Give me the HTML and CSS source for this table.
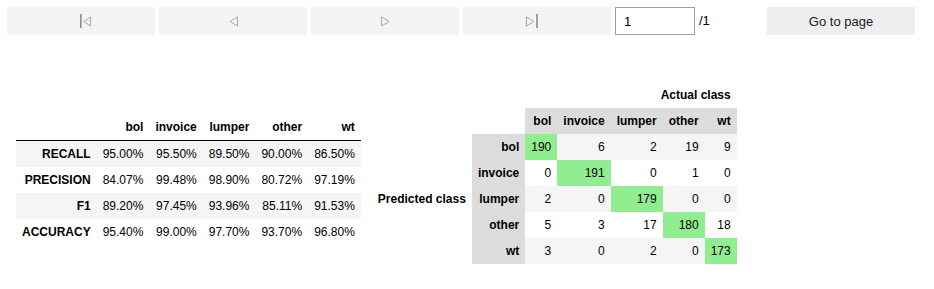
FILE: index.html
```html
<!DOCTYPE html>
<html>
<head>
<meta charset="utf-8">
<link rel="stylesheet" href="styles.css">
</head>
<body>
<div class="toolbar">
  <button class="nav nav-first" disabled>
    <svg width="11" height="14" viewBox="0 0 11 14"><rect x="0" y="0" width="1.6" height="14" fill="#8c8c8c"/><polygon points="10.5,3 3.5,7.5 10.5,12" fill="none" stroke="#a6a6a6" stroke-width="1"/></svg>
  </button>
  <button class="nav" disabled>
    <svg width="9" height="14" viewBox="0 0 9 14"><polygon points="8.5,3 0.8,7.5 8.5,12" fill="none" stroke="#a6a6a6" stroke-width="1"/></svg>
  </button>
  <button class="nav" disabled>
    <svg width="9" height="14" viewBox="0 0 9 14"><polygon points="0.5,3 8.2,7.5 0.5,12" fill="none" stroke="#a6a6a6" stroke-width="1"/></svg>
  </button>
  <button class="nav nav-last" disabled>
    <svg width="12" height="14" viewBox="0 0 12 14"><polygon points="0.5,3 7.8,7.5 0.5,12" fill="none" stroke="#a6a6a6" stroke-width="1"/><rect x="10.2" y="0" width="1.6" height="14" fill="#8c8c8c"/></svg>
  </button>
  <input class="page-input" type="text" value="1">
  <span class="page-total">/1</span>
  <button class="goto">Go to page</button>
</div>

<div class="tables">
  <table class="metrics">
    <thead>
      <tr><th></th><th>bol</th><th>invoice</th><th>lumper</th><th>other</th><th>wt</th></tr>
    </thead>
    <tbody>
      <tr><th>RECALL</th><td>95.00%</td><td>95.50%</td><td>89.50%</td><td>90.00%</td><td>86.50%</td></tr>
      <tr><th>PRECISION</th><td>84.07%</td><td>99.48%</td><td>98.90%</td><td>80.72%</td><td>97.19%</td></tr>
      <tr><th>F1</th><td>89.20%</td><td>97.45%</td><td>93.96%</td><td>85.11%</td><td>91.53%</td></tr>
      <tr><th>ACCURACY</th><td>95.40%</td><td>99.00%</td><td>97.70%</td><td>93.70%</td><td>96.80%</td></tr>
    </tbody>
  </table>

  <table class="confusion">
    <thead>
      <tr><th></th><th></th><th colspan="5" class="group">Actual class</th></tr>
      <tr><th></th><th></th><th class="col">bol</th><th class="col">invoice</th><th class="col">lumper</th><th class="col">other</th><th class="col">wt</th></tr>
    </thead>
    <tbody>
      <tr><th rowspan="5" class="pred">Predicted class</th><th class="idx">bol</th><td class="hit">190</td><td>6</td><td>2</td><td>19</td><td>9</td></tr>
      <tr><th class="idx">invoice</th><td>0</td><td class="hit">191</td><td>0</td><td>1</td><td>0</td></tr>
      <tr><th class="idx">lumper</th><td>2</td><td>0</td><td class="hit">179</td><td>0</td><td>0</td></tr>
      <tr><th class="idx">other</th><td>5</td><td>3</td><td>17</td><td class="hit">180</td><td>18</td></tr>
      <tr><th class="idx">wt</th><td>3</td><td>0</td><td>2</td><td>0</td><td class="hit">173</td></tr>
    </tbody>
  </table>
</div>
</body>
</html>
```

FILE: styles.css
```css
body {
  margin: 0;
  background: #ffffff;
  font-family: "Liberation Sans", Arial, sans-serif;
  color: #000;
}

.toolbar {
  display: flex;
  align-items: center;
  gap: 4px;
  padding: 7px 0 0 7px;
}

.nav, .goto {
  width: 148px;
  height: 28px;
  border: none;
  padding: 0;
  margin: 0;
  font-family: "Liberation Sans", Arial, sans-serif;
  font-size: 13px;
  display: flex;
  align-items: center;
  justify-content: center;
}

.nav {
  background: #f4f4f4;
}

.nav svg {
  display: block;
}

.nav-first svg {
  margin-left: 9px;
}

.nav-last svg {
  margin-right: 10px;
}

.goto {
  background: #eeeeee;
  color: #1a1a1a;
}

.page-input {
  box-sizing: border-box;
  width: 80px;
  height: 28px;
  margin: 0;
  border: 1px solid #9e9e9e;
  padding: 0 8px;
  font-family: "Liberation Sans", Arial, sans-serif;
  font-size: 13px;
  color: #000;
  outline: none;
}

.page-total {
  width: 64px;
  font-size: 13px;
  line-height: 28px;
}

.tables {
  display: flex;
  align-items: flex-start;
  gap: 11px;
  margin-top: 47px;
  padding-left: 16px;
}

table {
  border-collapse: collapse;
  border-spacing: 0;
  font-size: 12px;
  line-height: 14px;
}

th, td {
  padding: 6px;
  text-align: right;
  white-space: nowrap;
  vertical-align: middle;
}

th {
  font-weight: bold;
}

.metrics {
  margin-top: 32px;
}

.metrics thead tr {
  border-bottom: 1px solid #000;
}

.metrics tbody tr:nth-child(odd) {
  background: #f5f5f5;
}

.confusion tbody tr:nth-child(odd) {
  background: #f5f5f5;
}

.confusion .col,
.confusion .idx {
  background: #dcdcdc;
}

.confusion .pred {
  background: #ffffff;
}

.confusion .hit {
  background: #90ee90;
}
```
